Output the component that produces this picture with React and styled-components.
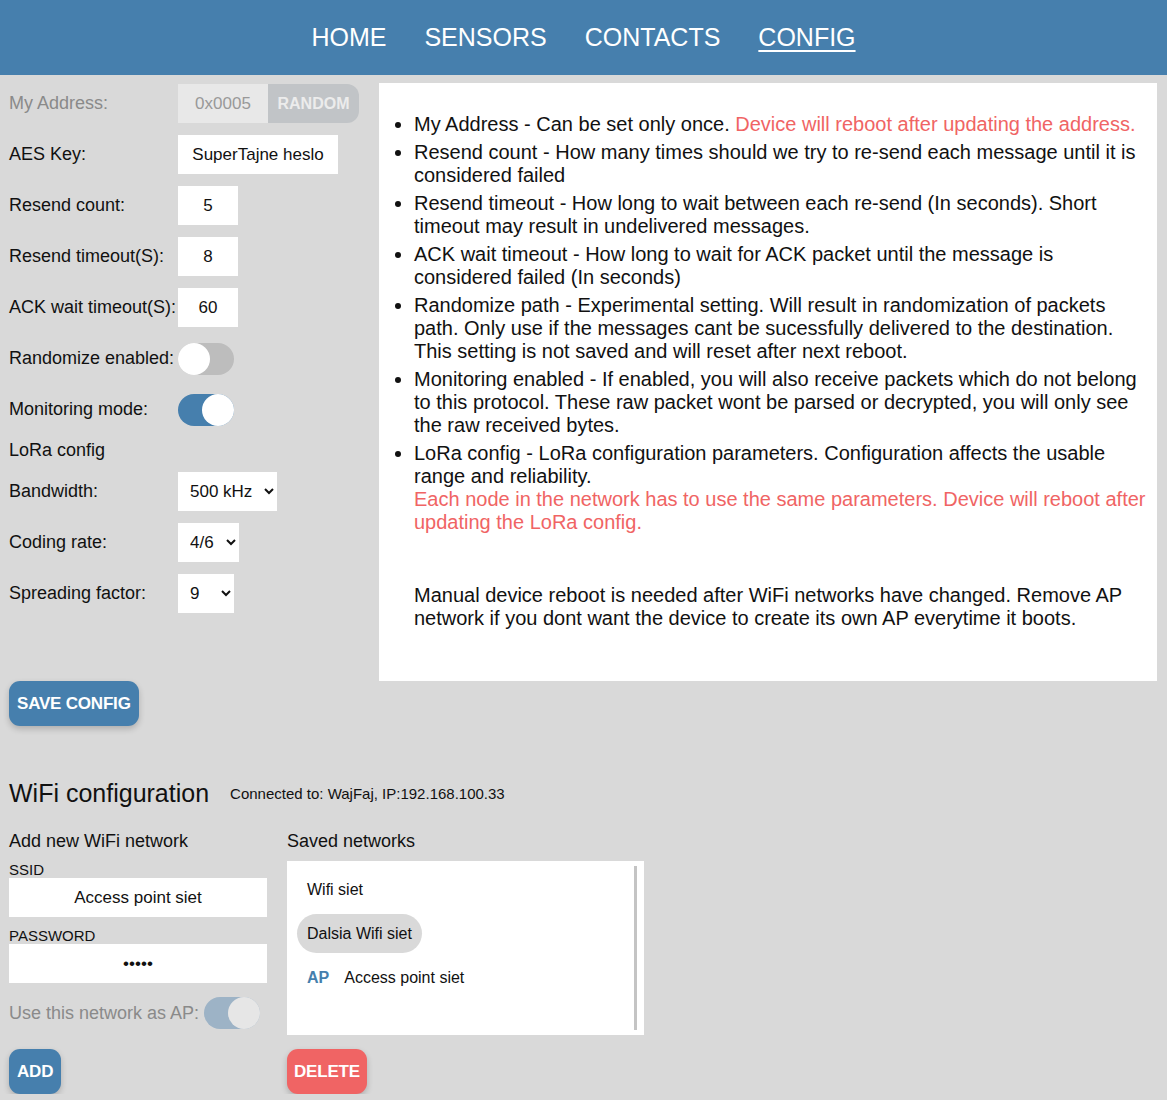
import styled, { createGlobalStyle } from "styled-components";

const Global = createGlobalStyle`
  body {
    margin: 0;
    background: #d9d9d9;
    font-family: "Liberation Sans", Arial, sans-serif;
    color: #111;
  }
`;

const blue = "#467fad";
const red = "#f06464";

const Header = styled.nav`
  height: 75px;
  background: ${blue};
  display: flex;
  justify-content: center;
  align-items: center;
  gap: 38px;
`;

const NavLink = styled.a`
  color: #fff;
  font-size: 25px;
  text-decoration: ${(p) => (p.$active ? "underline" : "none")};
  text-underline-offset: 4px;
  text-decoration-thickness: 2px;
  padding-bottom: 1px;
`;

const Top = styled.div`
  display: flex;
  align-items: flex-start;
  padding-top: 8px;
`;

const Form = styled.div`
  width: 379px;
  padding: 1px 0 0 9px;
  box-sizing: border-box;
  display: flex;
  flex-direction: column;
  gap: 12px;
`;

const Row = styled.div`
  display: flex;
  align-items: center;
  height: ${(p) => p.$h || 39}px;
`;

const Label = styled.span`
  width: 169px;
  font-size: 18px;
  color: ${(p) => (p.$muted ? "#8a8a8a" : "#111")};
`;

const Input = styled.input`
  width: ${(p) => p.$w}px;
  height: 39px;
  box-sizing: border-box;
  border: none;
  background: ${(p) => (p.$disabled ? "#e8e8e8" : "#fff")};
  color: ${(p) => (p.$disabled ? "#999" : "#111")};
  font-family: inherit;
  font-size: 17px;
  text-align: center;
  outline: none;
  padding: 0;
`;

const Random = styled.button`
  height: 39px;
  width: 91px;
  border: none;
  border-radius: 0 12px 12px 0;
  background: #c1c4c7;
  color: #ececec;
  font-family: inherit;
  font-weight: bold;
  font-size: 16px;
  padding: 0;
`;

const Track = styled.span`
  width: 56px;
  height: 32px;
  border-radius: 16px;
  background: ${(p) => p.$bg};
  display: flex;
  justify-content: ${(p) => (p.$on ? "flex-end" : "flex-start")};
`;

const Knob = styled.span`
  width: 32px;
  height: 32px;
  border-radius: 50%;
  background: ${(p) => p.$bg || "#fff"};
`;

const Select = styled.select`
  width: ${(p) => p.$w}px;
  height: 39px;
  border: none;
  background: #fff;
  font-family: inherit;
  font-size: 17px;
  color: #111;
  padding: 0 6px 0 8px;
  outline: none;
`;

const Panel = styled.div`
  flex: 1;
  margin-right: 10px;
  background: #fff;
  height: 598px;
  box-sizing: border-box;
  padding: 18px 10px 10px 10px;
  font-size: 20px;
  line-height: 23px;
`;

const List = styled.ul`
  margin: 12px 0 0;
  padding-left: 25px;
  display: flex;
  flex-direction: column;
  gap: 5px;
`;

const Warn = styled.span`
  color: ${red};
`;

const Note = styled.p`
  margin: 50px 0 0 25px;
`;

const Button = styled.button`
  height: 45px;
  padding: 0 ${(p) => p.$px || 8}px;
  border: none;
  border-radius: 11px;
  background: ${(p) => p.$bg || blue};
  color: #fff;
  font-family: inherit;
  font-weight: bold;
  font-size: 17px;
  letter-spacing: -0.2px;
  box-shadow: 0 3px 6px rgba(0, 0, 0, 0.2);
`;

const SaveWrap = styled.div`
  padding-left: 9px;
`;

const WifiHead = styled.div`
  display: flex;
  align-items: center;
  gap: 21px;
  padding: 53px 0 0 9px;
`;

const H2 = styled.h2`
  margin: 0;
  font-size: 25px;
  font-weight: normal;
`;

const Small = styled.span`
  font-size: 15px;
`;

const Wifi = styled.div`
  display: flex;
  gap: 20px;
  padding: 23px 0 0 9px;
`;

const Col = styled.div`
  width: ${(p) => p.$w}px;
  display: flex;
  flex-direction: column;
`;

const SubHead = styled.div`
  font-size: 18px;
  height: 22px;
`;

const Caption = styled.div`
  font-size: 15px;
  margin-top: ${(p) => p.$mt}px;
  height: 17px;
`;

const ApRow = styled.div`
  display: flex;
  align-items: center;
  justify-content: space-between;
  margin-top: 14px;
  padding-right: 7px;
  font-size: 18px;
  color: #8a8a8a;
`;

const NetBox = styled.div`
  margin-top: 8px;
  height: 174px;
  background: #fff;
  padding: 5px;
  box-sizing: border-box;
`;

const NetList = styled.div`
  height: 100%;
  border-right: 3px solid #c4c4c4;
  margin-right: 2px;
  padding: 4px 5px;
  box-sizing: border-box;
  display: flex;
  flex-direction: column;
  align-items: flex-start;
  gap: 5px;
`;

const Net = styled.div`
  height: 39px;
  display: flex;
  align-items: center;
  gap: 15px;
  padding: 0 10px;
  border-radius: 20px;
  font-size: 16px;
  background: ${(p) => (p.$selected ? "#d9d9d9" : "transparent")};
`;

const Ap = styled.b`
  color: ${blue};
`;

const ButtonRow = styled.div`
  margin-top: ${(p) => p.$mt}px;
`;

function Toggle({ on, bg, knob }) {
  return (
    <Track $on={on} $bg={bg}>
      <Knob $bg={knob} />
    </Track>
  );
}

export default function App() {
  return (
    <>
      <Global />
      <Header>
        <NavLink>HOME</NavLink>
        <NavLink>SENSORS</NavLink>
        <NavLink>CONTACTS</NavLink>
        <NavLink $active>CONFIG</NavLink>
      </Header>
      <Top>
        <Form>
          <Row>
            <Label $muted>My Address:</Label>
            <Input $w={90} $disabled defaultValue="0x0005" readOnly />
            <Random>RANDOM</Random>
          </Row>
          <Row>
            <Label>AES Key:</Label>
            <Input $w={160} defaultValue="SuperTajne heslo" />
          </Row>
          <Row>
            <Label>Resend count:</Label>
            <Input $w={60} defaultValue="5" />
          </Row>
          <Row>
            <Label>Resend timeout(S):</Label>
            <Input $w={60} defaultValue="8" />
          </Row>
          <Row>
            <Label>ACK wait timeout(S):</Label>
            <Input $w={60} defaultValue="60" />
          </Row>
          <Row>
            <Label>Randomize enabled:</Label>
            <Toggle on={false} bg="#bdbdbd" />
          </Row>
          <Row>
            <Label>Monitoring mode:</Label>
            <Toggle on bg={blue} />
          </Row>
          <Row $h={19}>
            <Label>LoRa config</Label>
          </Row>
          <Row>
            <Label>Bandwidth:</Label>
            <Select $w={99} defaultValue="500">
              <option value="125">125 kHz</option>
              <option value="250">250 kHz</option>
              <option value="500">500 kHz</option>
            </Select>
          </Row>
          <Row>
            <Label>Coding rate:</Label>
            <Select $w={61} defaultValue="4/6">
              <option>4/5</option>
              <option>4/6</option>
              <option>4/7</option>
              <option>4/8</option>
            </Select>
          </Row>
          <Row>
            <Label>Spreading factor:</Label>
            <Select $w={56} defaultValue="9">
              <option>7</option>
              <option>8</option>
              <option>9</option>
              <option>10</option>
              <option>11</option>
              <option>12</option>
            </Select>
          </Row>
        </Form>
        <Panel>
          <List>
            <li>
              My Address - Can be set only once.{" "}
              <Warn>Device will reboot after updating the address.</Warn>
            </li>
            <li>Resend count - How many times should we try to re-send each message until it is considered failed</li>
            <li>Resend timeout - How long to wait between each re-send (In seconds). Short timeout may result in undelivered messages.</li>
            <li>ACK wait timeout - How long to wait for ACK packet until the message is considered failed (In seconds)</li>
            <li>Randomize path - Experimental setting. Will result in randomization of packets path. Only use if the messages cant be sucessfully delivered to the destination. This setting is not saved and will reset after next reboot.</li>
            <li>Monitoring enabled - If enabled, you will also receive packets which do not belong to this protocol. These raw packet wont be parsed or decrypted, you will only see the raw received bytes.</li>
            <li>
              LoRa config - LoRa configuration parameters. Configuration affects the usable range and reliability.
              <br />
              <Warn>Each node in the network has to use the same parameters. Device will reboot after updating the LoRa config.</Warn>
            </li>
          </List>
          <Note>
            Manual device reboot is needed after WiFi networks have changed. Remove AP network if you dont want the device to create its own AP everytime it boots.
          </Note>
        </Panel>
      </Top>
      <SaveWrap>
        <Button>SAVE CONFIG</Button>
      </SaveWrap>
      <WifiHead>
        <H2>WiFi configuration</H2>
        <Small>Connected to: WajFaj, IP:192.168.100.33</Small>
      </WifiHead>
      <Wifi>
        <Col $w={258}>
          <SubHead>Add new WiFi network</SubHead>
          <Caption $mt={8}>SSID</Caption>
          <Input $w={258} defaultValue="Access point siet" />
          <Caption $mt={10}>PASSWORD</Caption>
          <Input $w={258} type="password" defaultValue="heslo" />
          <ApRow>
            <span>Use this network as AP:</span>
            <Toggle on bg="#9db3c6" knob="#e6e6e6" />
          </ApRow>
          <ButtonRow $mt={20}>
            <Button>ADD</Button>
          </ButtonRow>
        </Col>
        <Col $w={357}>
          <SubHead>Saved networks</SubHead>
          <NetBox>
            <NetList>
              <Net>Wifi siet</Net>
              <Net $selected>Dalsia Wifi siet</Net>
              <Net>
                <Ap>AP</Ap>
                <span>Access point siet</span>
              </Net>
            </NetList>
          </NetBox>
          <ButtonRow $mt={14}>
            <Button $bg={red} $px={7}>DELETE</Button>
          </ButtonRow>
        </Col>
      </Wifi>
    </>
  );
}
